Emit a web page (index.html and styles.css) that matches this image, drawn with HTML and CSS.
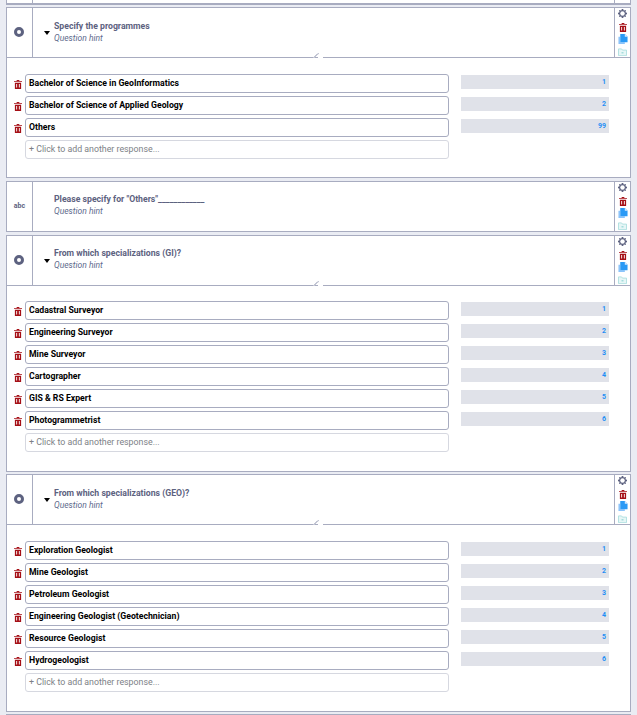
FILE: index.html
```html
<!DOCTYPE html>
<html lang="en">
<head>
<meta charset="utf-8">
<title>Survey editor</title>
<link rel="stylesheet" href="styles.css">
</head>
<body>
<svg class="defs" width="0" height="0" aria-hidden="true">
  <symbol id="gear" viewBox="0 0 12 12">
    <path fill="#5d6280" d="M5 0h2l.3 1.600 1.100.5 1.400-.9 1 1-.9 1.400.5 1.100L12 5v2l-1.600.3-.5 1.100.9 1.400-1 1-1.400-.9-1.100.5L7 12H5l-.3-1.600-1.100-.5-1.400.9-1-1 .9-1.400-.5-1.100L0 7V5l1.600-.3.5-1.100-.9-1.400 1-1 1.400.9 1.100-.5z"/>
    <circle cx="6" cy="6" r="3" fill="#fff"/>
  </symbol>
  <symbol id="trash" viewBox="0 0 9 10">
    <path fill="#a50f16" d="M3 0h3v1h3v1H0V1h3zM1 3h7v7H1zm1.500 1.500v4h1v-4zm3 0v4h1v-4z"/>
  </symbol>
  <symbol id="copy" viewBox="0 0 10 11">
    <path fill="#8cc4fa" d="M0 3h2v6h5v2H0z"/>
    <path fill="#2a9af5" d="M2 0h5l3 3v6H2z"/>
    <path fill="#d6eafd" d="M7 0l3 3H7z"/>
  </symbol>
  <symbol id="folder" viewBox="0 0 9 8">
    <path fill="#e6f6f6" stroke="#a5dcdc" stroke-width=".8" d="M.5.900h3l1 1.200h4v5.500h-8z"/>
    <path fill="#a5dcdc" d="M3.500 4h2v1.500h-2z"/>
  </symbol>
</svg>

<main class="page">
  <section class="card card-stub">
    <header class="head">
      <div class="side"></div>
      <div class="main"></div>
      <div class="tools"></div>
    </header>
  </section>

  <section class="card">
    <header class="head">
      <div class="side"><span class="radio"></span></div>
      <div class="main">
        <span class="caret"></span>
        <div class="titles">
          <div class="title">Specify the programmes</div>
          <div class="hint">Question hint</div>
        </div>
      </div>
      <div class="tools">
        <svg class="i-gear"><use href="#gear"/></svg>
        <svg class="i-trash"><use href="#trash"/></svg>
        <svg class="i-copy"><use href="#copy"/></svg>
        <svg class="i-folder"><use href="#folder"/></svg>
      </div>
      <span class="notch"></span>
    </header>
    <div class="body">
      <div class="row">
        <svg class="i-trash"><use href="#trash"/></svg>
        <div class="answer">Bachelor of Science in GeoInformatics</div>
        <div class="score">1</div>
      </div>
      <div class="row">
        <svg class="i-trash"><use href="#trash"/></svg>
        <div class="answer">Bachelor of Science of Applied Geology</div>
        <div class="score">2</div>
      </div>
      <div class="row">
        <svg class="i-trash"><use href="#trash"/></svg>
        <div class="answer">Others</div>
        <div class="score">99</div>
      </div>
      <div class="row">
        <div class="answer add">+ Click to add another response...</div>
      </div>
    </div>
  </section>

  <section class="card">
    <header class="head head-text">
      <div class="side"><span class="abc">abc</span></div>
      <div class="main">
        <div class="titles">
          <div class="title">Please specify for "Others"____________</div>
          <div class="hint">Question hint</div>
        </div>
      </div>
      <div class="tools">
        <svg class="i-gear"><use href="#gear"/></svg>
        <svg class="i-trash"><use href="#trash"/></svg>
        <svg class="i-copy"><use href="#copy"/></svg>
        <svg class="i-folder"><use href="#folder"/></svg>
      </div>
    </header>
  </section>

  <section class="card">
    <header class="head">
      <div class="side"><span class="radio"></span></div>
      <div class="main">
        <span class="caret"></span>
        <div class="titles">
          <div class="title">From which specializations (GI)?</div>
          <div class="hint">Question hint</div>
        </div>
      </div>
      <div class="tools">
        <svg class="i-gear"><use href="#gear"/></svg>
        <svg class="i-trash"><use href="#trash"/></svg>
        <svg class="i-copy"><use href="#copy"/></svg>
        <svg class="i-folder"><use href="#folder"/></svg>
      </div>
      <span class="notch"></span>
    </header>
    <div class="body">
      <div class="row"><svg class="i-trash"><use href="#trash"/></svg><div class="answer">Cadastral Surveyor</div><div class="score">1</div></div>
      <div class="row"><svg class="i-trash"><use href="#trash"/></svg><div class="answer">Engineering Surveyor</div><div class="score">2</div></div>
      <div class="row"><svg class="i-trash"><use href="#trash"/></svg><div class="answer">Mine Surveyor</div><div class="score">3</div></div>
      <div class="row"><svg class="i-trash"><use href="#trash"/></svg><div class="answer">Cartographer</div><div class="score">4</div></div>
      <div class="row"><svg class="i-trash"><use href="#trash"/></svg><div class="answer">GIS &amp; RS Expert</div><div class="score">5</div></div>
      <div class="row"><svg class="i-trash"><use href="#trash"/></svg><div class="answer">Photogrammetrist</div><div class="score">6</div></div>
      <div class="row"><div class="answer add">+ Click to add another response...</div></div>
    </div>
  </section>

  <section class="card">
    <header class="head">
      <div class="side"><span class="radio"></span></div>
      <div class="main">
        <span class="caret"></span>
        <div class="titles">
          <div class="title">From which specializations (GEO)?</div>
          <div class="hint">Question hint</div>
        </div>
      </div>
      <div class="tools">
        <svg class="i-gear"><use href="#gear"/></svg>
        <svg class="i-trash"><use href="#trash"/></svg>
        <svg class="i-copy"><use href="#copy"/></svg>
        <svg class="i-folder"><use href="#folder"/></svg>
      </div>
      <span class="notch"></span>
    </header>
    <div class="body">
      <div class="row"><svg class="i-trash"><use href="#trash"/></svg><div class="answer">Exploration Geologist</div><div class="score">1</div></div>
      <div class="row"><svg class="i-trash"><use href="#trash"/></svg><div class="answer">Mine Geologist</div><div class="score">2</div></div>
      <div class="row"><svg class="i-trash"><use href="#trash"/></svg><div class="answer">Petroleum Geologist</div><div class="score">3</div></div>
      <div class="row"><svg class="i-trash"><use href="#trash"/></svg><div class="answer">Engineering Geologist (Geotechnician)</div><div class="score">4</div></div>
      <div class="row"><svg class="i-trash"><use href="#trash"/></svg><div class="answer">Resource Geologist</div><div class="score">5</div></div>
      <div class="row"><svg class="i-trash"><use href="#trash"/></svg><div class="answer">Hydrogeologist</div><div class="score">6</div></div>
      <div class="row"><div class="answer add">+ Click to add another response...</div></div>
    </div>
  </section>

  <section class="card card-next"></section>
</main>
</body>
</html>
```

FILE: styles.css
```css
* { box-sizing: border-box; }
html, body { height: 100%; }
body {
  margin: 0;
  overflow: hidden;
  background: #eaecf3;
  font-family: Roboto, "Liberation Sans", Arial, sans-serif;
}
.defs { position: absolute; }
.page {
  display: flex;
  flex-direction: column;
  gap: 2.400px;
  width: 625px;
  margin-left: 6px;
  height: 715px;
}
.card {
  flex: none;
  background: #fff;
  border: 1px solid #a8acc0;
}
.card-stub { margin-top: -47.400px; }
.card-next { height: 20px; }

.head {
  position: relative;
  display: flex;
  height: 50px;
  border-bottom: 1px solid #a8acc0;
}
.head-text { height: 49.400px; border-bottom: 0; }
.side {
  flex: none;
  width: 26px;
  display: flex;
  align-items: center;
  justify-content: center;
  border-right: 1px solid #a8acc0;
}
.main {
  flex: 1;
  display: flex;
  align-items: center;
  padding-left: 11px;
}
.tools {
  flex: none;
  width: 16px;
  border-left: 1px solid #a8acc0;
  display: flex;
  flex-direction: column;
  align-items: center;
  padding-top: 1px;
}
.radio {
  width: 10px;
  height: 10px;
  margin: 0 1px 1px 0;
  border-radius: 50%;
  border: 3.500px solid #5d6280;
  background: #fff;
}
.abc {
  font-size: 7px;
  font-weight: 700;
  color: #5d6280;
}
.caret {
  flex: none;
  width: 0;
  height: 0;
  border-left: 3.500px solid transparent;
  border-right: 3.500px solid transparent;
  border-top: 4px solid #000;
  margin: 1px 3px 0 0;
}
.titles {
  display: flex;
  flex-direction: column;
  gap: 1px;
  margin: 0 0 1px 1px;
}
.head-text .titles { padding-left: 9px; margin-bottom: 2px; }
.title {
  font-size: 8.700px;
  line-height: 11px;
  font-weight: 700;
  color: #5d6280;
}
.hint {
  font-size: 8.500px;
  line-height: 11px;
  font-style: italic;
  color: #5d6a8c;
}
.i-gear { width: 9px; height: 9px; flex: none; }
.i-trash { width: 8px; height: 9px; flex: none; }
.tools .i-trash { margin-top: 5px; }
.i-copy { width: 10px; height: 10px; margin-top: 2px; flex: none; }
.i-folder { width: 9px; height: 8px; margin-top: 4px; flex: none; }

.notch {
  position: absolute;
  left: 306px;
  bottom: -1px;
  width: 10px;
  height: 5px;
  background:
    linear-gradient(#fff, #fff) right bottom / 5px 1px no-repeat,
    linear-gradient(to bottom right, transparent 42%, #c3c6d4 43%, #c3c6d4 60%, transparent 61%) left bottom / 6px 5px no-repeat;
}

.body {
  display: flex;
  flex-direction: column;
  gap: 3px;
  padding: 15.800px 0 18.600px 7px;
}
.row {
  display: flex;
  align-items: center;
  height: 19px;
}
.row .i-trash { margin-top: 2px; }
.answer {
  width: 424px;
  height: 19px;
  margin-left: 3px;
  padding-left: 3px;
  border: 1px solid #a8acc0;
  border-radius: 3px;
  font-size: 8.700px;
  line-height: 17px;
  font-weight: 700;
  color: #000;
  background: #fff;
}
.answer.add {
  margin-left: 11px;
  border-color: #d6d8e0;
  font-size: 8.800px;
  font-weight: 400;
  color: #7d7f86;
}
.score {
  align-self: flex-start;
  width: 148px;
  height: 14px;
  margin: 1px 0 0 12px;
  padding-right: 3px;
  background: #e0e2e9;
  color: #1f8ef5;
  font-size: 7px;
  font-weight: 700;
  line-height: 14px;
  text-align: right;
}
```
